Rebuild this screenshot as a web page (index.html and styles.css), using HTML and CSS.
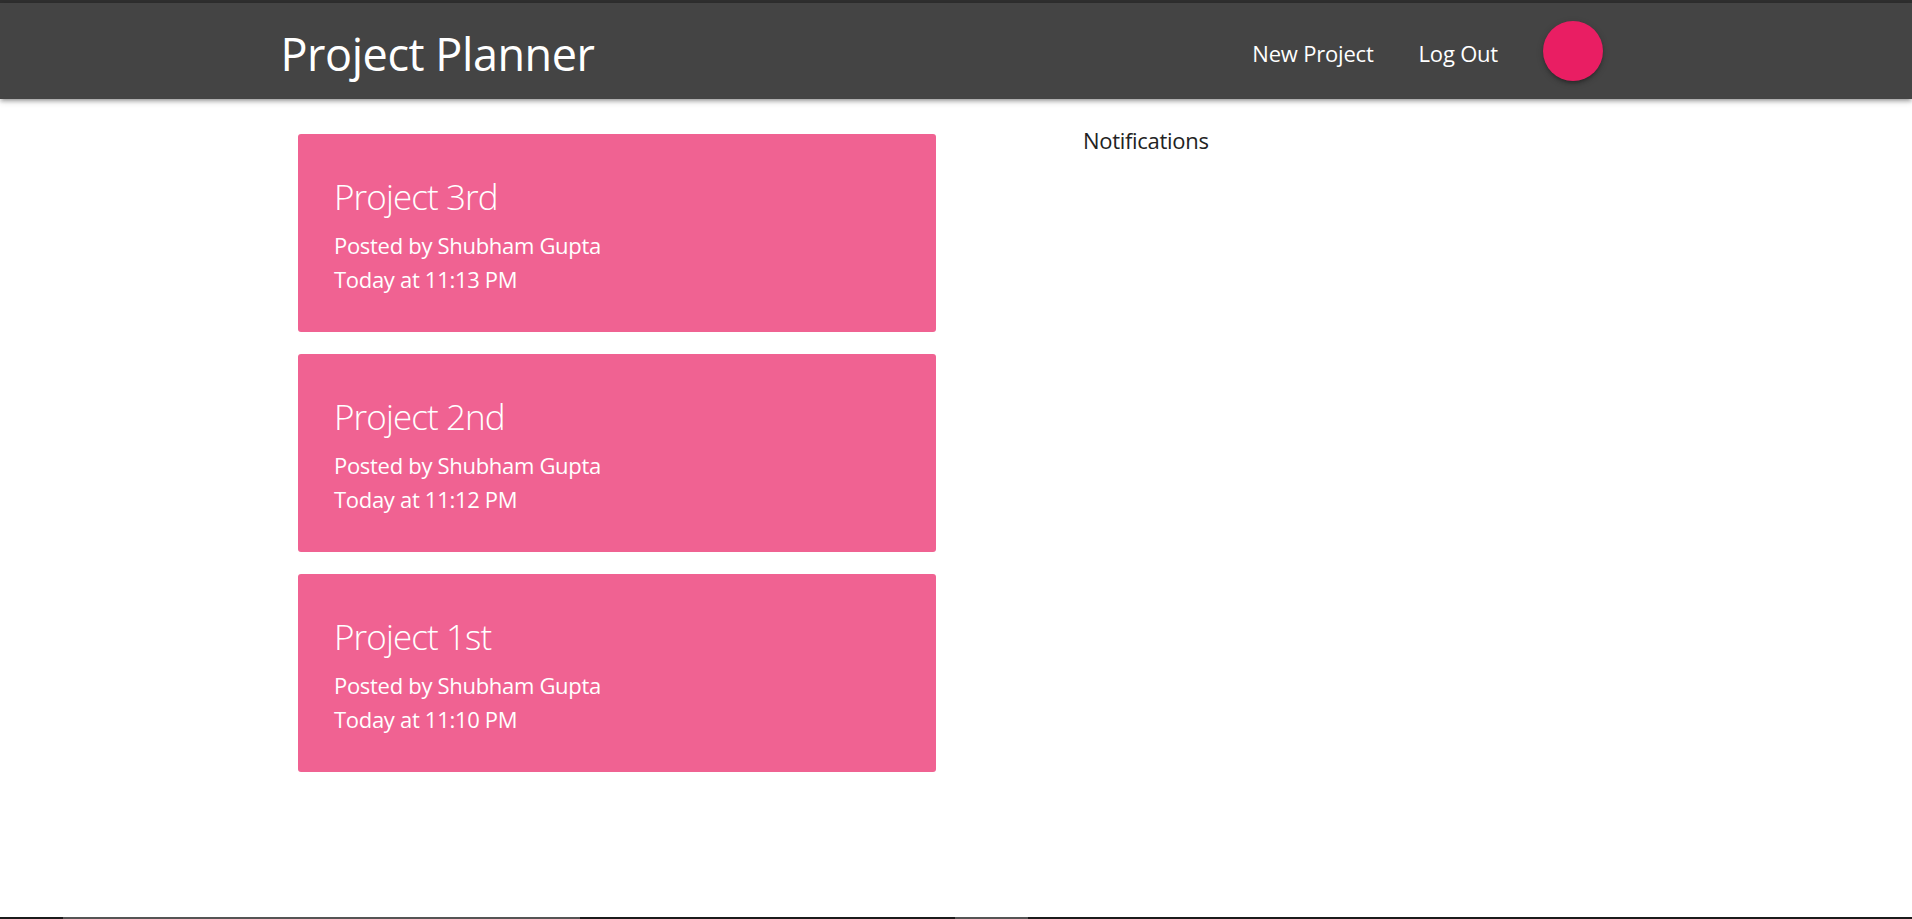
FILE: index.html
```html
<!DOCTYPE html>
<html lang="en">
<head>
<meta charset="utf-8">
<title>Project Planner</title>
<link rel="stylesheet" href="styles.css">
</head>
<body>
<div class="page">
  <div class="topline"></div>
  <header class="nav">
    <div class="nav-inner">
      <a class="brand" href="#">Project Planner</a>
      <ul class="links">
        <li><a href="#">New Project</a></li>
        <li><a href="#">Log Out</a></li>
        <li><a href="#" class="avatar-link"><span class="avatar"></span></a></li>
      </ul>
    </div>
  </header>
  <main class="content">
    <section class="projects">
      <div class="card">
        <span class="card-title">Project 3rd</span>
        <p>Posted by Shubham Gupta</p>
        <p>Today at 11:13 PM</p>
      </div>
      <div class="card">
        <span class="card-title">Project 2nd</span>
        <p>Posted by Shubham Gupta</p>
        <p>Today at 11:12 PM</p>
      </div>
      <div class="card">
        <span class="card-title">Project 1st</span>
        <p>Posted by Shubham Gupta</p>
        <p>Today at 11:10 PM</p>
      </div>
    </section>
    <aside class="notifications">
      <p class="notif-title">Notifications</p>
    </aside>
  </main>
  <div class="taskbar">
    <span class="seg dark s1"></span>
    <span class="seg grey s2"></span>
    <span class="seg dark s3"></span>
    <span class="seg grey s4"></span>
    <span class="seg dark s5"></span>
  </div>
</div>
</body>
</html>
```

FILE: styles.css
```css
* { box-sizing: border-box; }

html, body {
  margin: 0;
  padding: 0;
  background: #fff;
  font-family: "Open Sans", "Noto Sans", "Liberation Sans", sans-serif;
  color: rgba(0, 0, 0, 0.87);
}

.page {
  height: 100vh;
  display: flex;
  flex-direction: column;
  overflow: hidden;
}

.topline {
  height: 3px;
  background: #2f2f2f;
  flex: none;
}

.nav {
  flex: none;
  height: 96px;
  background: #444444;
  box-shadow: 0 3px 3px 0 rgba(0,0,0,.14), 0 4px 2px -3px rgba(0,0,0,.12), 0 2px 7px 0 rgba(0,0,0,.2);
  position: relative;
  z-index: 2;
}

.nav-inner {
  width: 1339px;
  margin: 0 auto;
  height: 96px;
  display: flex;
  align-items: center;
  justify-content: space-between;
}

.brand {
  color: #fff;
  text-decoration: none;
  font-size: 45px;
  line-height: 96px;
  font-weight: 400;
  letter-spacing: -0.45px;
  padding-top: 5px;
  margin-left: -6px;
}

.links {
  list-style: none;
  margin: 0;
  padding: 0;
  display: flex;
  align-items: center;
  height: 96px;
}

.links a {
  display: flex;
  align-items: center;
  height: 96px;
  padding: 0 22.5px;
  color: #fff;
  text-decoration: none;
  font-size: 22px;
  letter-spacing: -0.2px;
}

.links a.avatar-link {
  padding-top: 0;
}

.links li:not(:last-child) a {
  padding-top: 4px;
}

.avatar {
  display: block;
  width: 60px;
  height: 60px;
  border-radius: 50%;
  background: #e91e63;
  box-shadow: 0 3px 3px 0 rgba(0,0,0,.14), 0 4px 2px -3px rgba(0,0,0,.12), 0 2px 7px 0 rgba(0,0,0,.2);
}

.content {
  flex: 1;
  width: 1339px;
  margin: 0 auto;
  padding: 24px 0 0 11.5px;
  display: flex;
  align-items: flex-start;
}

.projects {
  width: 638px;
  padding-top: 11px;
  display: flex;
  flex-direction: column;
  gap: 22.5px;
}

.card {
  background: #f06292;
  border-radius: 3px;
  padding: 36px 36px 35px 36px;
  color: #fff;
}

.card-title {
  display: block;
  font-size: 35px;
  font-weight: 300;
  line-height: 48px;
  padding-top: 3px;
  margin-bottom: 8px;
  letter-spacing: -0.9px;
}

.card p {
  margin: 0;
  font-size: 22px;
  line-height: 33.75px;
  letter-spacing: -0.3px;
}

.notifications {
  margin-left: 147px;
  padding-top: 1px;
}

.notif-title {
  margin: 0;
  font-size: 22px;
  line-height: 33.75px;
  color: #222;
  letter-spacing: -0.3px;
}

.taskbar {
  flex: none;
  height: 2px;
  display: flex;
}

.seg { display: block; height: 2px; }
.dark { background: #1b1b1b; }
.grey { background: #555; }
.s1 { width: 63px; }
.s2 { width: 517px; }
.s3 { width: 375px; }
.s4 { width: 73px; }
.s5 { flex: 1; }
```
